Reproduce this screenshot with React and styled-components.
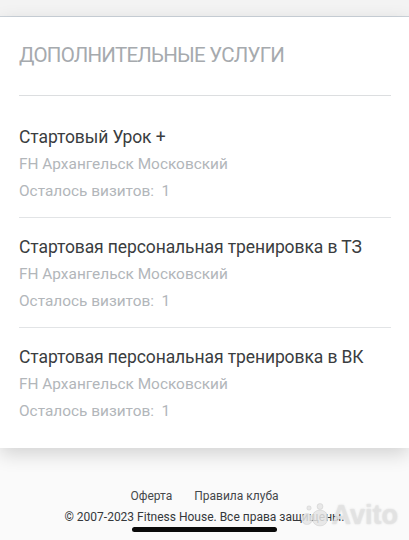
import React from "react";
import styled, { createGlobalStyle } from "styled-components";

const Global = createGlobalStyle`
  html, body { margin: 0; padding: 0; }
  body {
    background: #fafafa;
    font-family: Roboto, "Noto Sans", "Liberation Sans", sans-serif;
    -webkit-font-smoothing: antialiased;
  }
  #root { min-height: 540px; }
`;

const Page = styled.div`
  position: relative;
  width: 409px;
  height: 540px;
  overflow: hidden;
  display: flex;
  flex-direction: column;
  background: #fafafa;
`;

const TopBar = styled.div`
  height: 16px;
  flex: none;
  background: #f3f3f3;
  border-bottom: 1px solid #cdd4db;
`;

const Card = styled.section`
  flex: none;
  background: #fff;
  padding: 0 18px 11px 19px;
  box-shadow: 0 6px 18px rgba(0, 0, 0, 0.16);
`;

const Title = styled.h2`
  margin: 0;
  padding: 26px 0 28px;
  font-size: 20.5px;
  line-height: 24px;
  font-weight: 400;
  letter-spacing: -0.75px;
  color: #a6aaae;
  text-transform: uppercase;
  border-bottom: 1px solid #dcdee0;
`;

const List = styled.div`
  padding-top: 12px;
`;

const Item = styled.div`
  display: flex;
  flex-direction: column;
  padding: 15px 0 12px;
  border-bottom: ${(p) => (p.$last ? "none" : "1px solid #e2e4e6")};
`;

const ItemName = styled.div`
  font-size: 17.5px;
  line-height: 28px;
  letter-spacing: -0.1px;
  color: #3a3d40;
`;

const Meta = styled.div`
  font-size: 15.4px;
  line-height: 27px;
  color: #b2b6ba;
`;

const Footer = styled.footer`
  flex: 1;
  display: flex;
  flex-direction: column;
  align-items: center;
  padding-top: 40px;
`;

const Links = styled.div`
  display: flex;
  gap: 22px;
  font-size: 12px;
  line-height: 16px;
  color: #45484b;
`;

const Copy = styled.div`
  margin-top: 5px;
  font-size: 12px;
  line-height: 16px;
  color: #35383b;
`;

const HomeBar = styled.div`
  width: 145px;
  height: 5px;
  margin-top: 2px;
  border-radius: 3px;
  background: #0a0a0a;
`;

const Watermark = styled.div`
  position: absolute;
  right: 11px;
  bottom: 13px;
  display: flex;
  align-items: center;
  gap: 2px;
  font-family: "Liberation Sans", Arial, sans-serif;
  font-weight: 700;
  font-size: 27px;
  line-height: 24px;
  color: rgba(228, 228, 228, 0.85);
  text-shadow: 0 0 2px rgba(150, 150, 150, 0.35);
  pointer-events: none;
`;

const items = [
  "Стартовый Урок +",
  "Стартовая персональная тренировка в ТЗ",
  "Стартовая персональная тренировка в ВК",
];

export default function App() {
  return (
    <Page>
      <Global />
      <TopBar />
      <Card>
        <Title>Дополнительные услуги</Title>
        <List>
          {items.map((name, i) => (
            <Item key={name} $last={i === items.length - 1}>
              <ItemName>{name}</ItemName>
              <Meta>FH Архангельск Московский</Meta>
              <Meta>Осталось визитов:&nbsp; 1</Meta>
            </Item>
          ))}
        </List>
      </Card>
      <Footer>
        <Links>
          <span>Оферта</span>
          <span>Правила клуба</span>
        </Links>
        <Copy>© 2007-2023 Fitness House. Все права защищены.</Copy>
        <HomeBar />
      </Footer>
      <Watermark>
        <svg width="30" height="24" viewBox="0 0 30 24">
          <g fill="rgba(228,228,228,0.85)" stroke="rgba(150,150,150,0.3)" strokeWidth="0.6">
            <circle cx="20" cy="15" r="8" />
            <circle cx="7" cy="16" r="5.5" />
            <circle cx="20" cy="3.5" r="3" />
            <circle cx="9" cy="5" r="2.2" />
          </g>
        </svg>
        Avito
      </Watermark>
    </Page>
  );
}
